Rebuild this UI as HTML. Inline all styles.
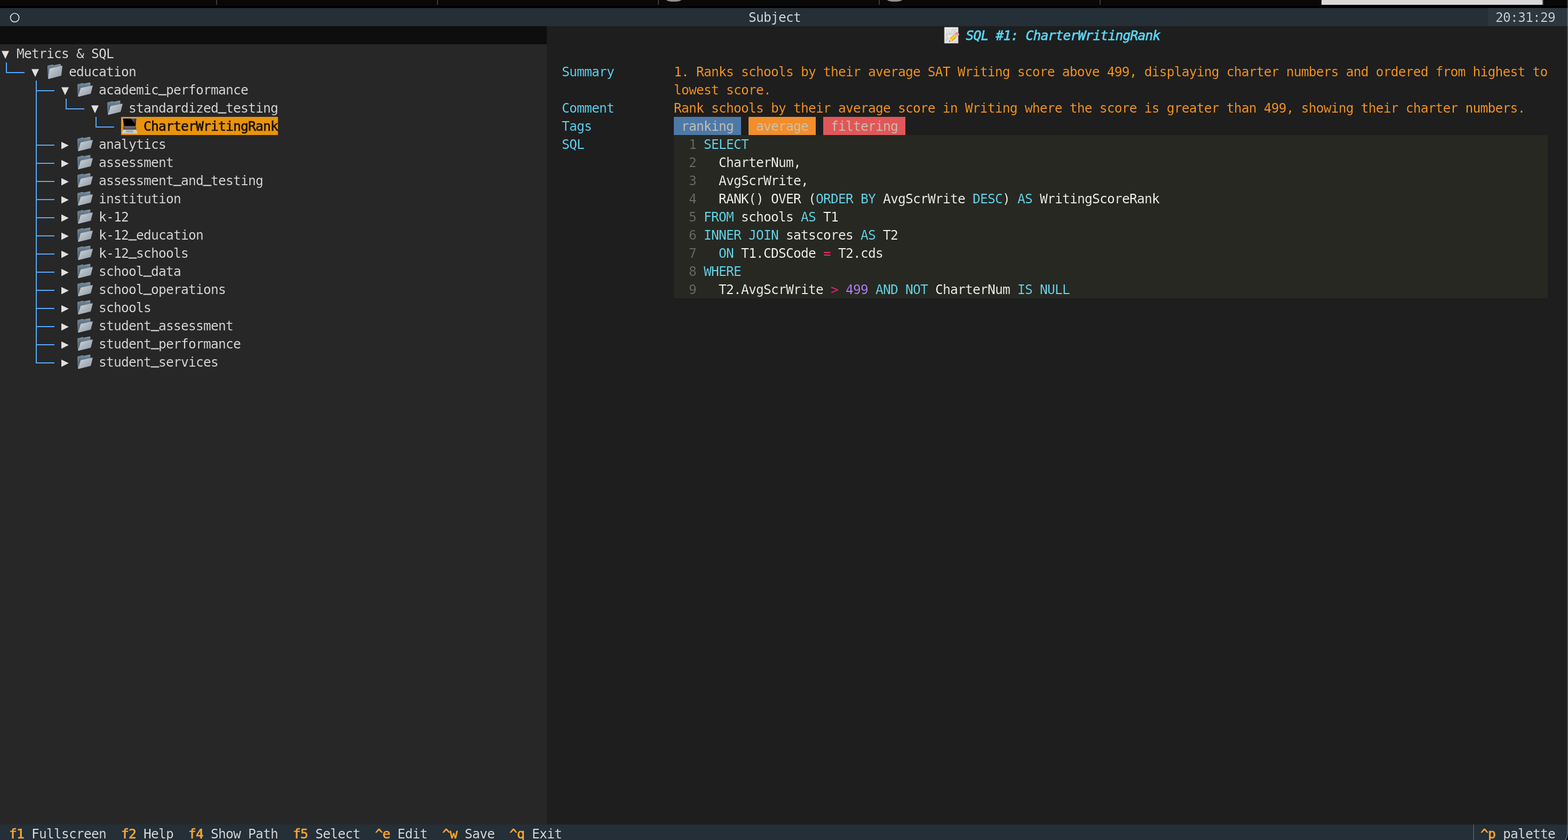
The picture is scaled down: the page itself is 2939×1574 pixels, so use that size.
<!DOCTYPE html>
<html lang="en"><head><meta charset="utf-8"><title>Subject</title>
<style>
html,body{margin:0;padding:0;background:#1e1e1e;}
body{width:2939px;height:1574px;position:relative;overflow:hidden;font-family:"DejaVu Sans Mono", "Liberation Mono", monospace;font-size:24.6px;}
#scr{position:absolute;left:0;top:0;width:2939px;height:1574px;overflow:hidden;transform:translateZ(0)}
.r{position:absolute;display:block}
.t{position:absolute;display:block;height:34px;line-height:36.0px;white-space:pre;letter-spacing:-0.8104px;overflow:visible;font-kerning:none;font-variant-ligatures:none}
.b{-webkit-text-stroke:0.7px currentColor}
.i{font-style:italic}
.u{position:relative;top:-4.6px;-webkit-text-stroke:0.8px currentColor}
</style></head><body><div id="scr">
<div class="r" style="left:0px;top:0px;width:2939px;height:15px;background:#000;"></div>
<div class="r" style="left:0px;top:0px;width:2939px;height:10.5px;background:#080808;"></div>
<div class="r" style="left:405px;top:0px;width:2px;height:9px;background:#3b3b3b;"></div>
<div class="r" style="left:819px;top:0px;width:2px;height:9px;background:#3b3b3b;"></div>
<div class="r" style="left:1233px;top:0px;width:2px;height:9px;background:#3b3b3b;"></div>
<div class="r" style="left:1647px;top:0px;width:2px;height:9px;background:#3b3b3b;"></div>
<div class="r" style="left:2061px;top:0px;width:2px;height:9px;background:#3b3b3b;"></div>
<svg class="r" style="left:1247px;top:0" width="32" height="5" viewBox="0 0 32 5"><ellipse cx="16" cy="-1" rx="14.8" ry="4.1" fill="#909090"/></svg>
<svg class="r" style="left:1661px;top:0" width="32" height="5" viewBox="0 0 32 5"><ellipse cx="16" cy="-1" rx="14.8" ry="4.1" fill="#909090"/></svg>
<div class="r" style="left:2477px;top:0px;width:414px;height:9px;background:#d8d9d8;"></div>
<div class="r" style="left:2891px;top:0px;width:1.5px;height:9px;background:#555;"></div>
<div class="r" style="left:0px;top:15px;width:2939px;height:34px;background:#242f38;"></div>
<div class="r" style="left:2789px;top:15px;width:150px;height:34px;background:#2c373f;"></div>
<div class="r" style="left:0px;top:49px;width:1025px;height:34px;background:#0e0e0e;"></div>
<div class="r" style="left:0px;top:83px;width:1025px;height:1462px;background:#272727;"></div>
<div class="r" style="left:1025px;top:49px;width:1914px;height:1496px;background:#1e1e1e;"></div>
<div class="r" style="left:0px;top:1545px;width:2939px;height:29px;background:#242f38;"></div>
<svg class="r" style="left:0;top:15px" width="56" height="34" viewBox="0 0 56 34"><circle cx="27.6" cy="18.1" r="8.1" fill="none" stroke="#e0e0e0" stroke-width="1.7"/></svg>
<span class="t" style="left:1403px;top:15px;width:98px;color:#e0e0e0;-webkit-text-stroke:0.22px #242f38;">Subject</span>
<span class="t" style="left:2803px;top:15px;width:112px;color:#d0d1d2;-webkit-text-stroke:0.22px #2c373f;">20:31:29</span>
<svg width="0" height="0" style="position:absolute"><linearGradient id="gf" x1="0" y1="0" x2="1" y2="1"><stop offset="0" stop-color="#d3d8dd"/><stop offset="0.5" stop-color="#adb5bd"/><stop offset="1" stop-color="#8f99a3"/></linearGradient><linearGradient id="gb" x1="0" y1="0" x2="0" y2="1"><stop offset="0" stop-color="#9aabb8"/><stop offset="0.14" stop-color="#6e8293"/><stop offset="0.5" stop-color="#54687a"/><stop offset="1" stop-color="#4b5c6b"/></linearGradient><linearGradient id="gl" x1="0" y1="0" x2="1" y2="1"><stop offset="0" stop-color="#6a6a6a"/><stop offset="1" stop-color="#0c0c0c"/></linearGradient><linearGradient id="gp" x1="0" y1="0" x2="1" y2="1"><stop offset="0" stop-color="#f6f6f6"/><stop offset="1" stop-color="#d9d9d9"/></linearGradient><linearGradient id="gy" x1="0" y1="0" x2="0" y2="1"><stop offset="0" stop-color="#d3950a"/><stop offset="0.45" stop-color="#ffd53e"/><stop offset="1" stop-color="#f2b20c"/></linearGradient></svg>
<svg class="r" style="left:3px;top:83px" width="14" height="34" viewBox="0 0 14 34"><path d="M0 12.5 L14 12.5 L7 27.3 Z" fill="#e0e0e0"/></svg>
<span class="t" style="left:31px;top:83px;width:182px;color:#e0e0e0;-webkit-text-stroke:0.22px #272727;">Metrics &amp; SQL</span>
<div class="r" style="left:11px;top:117px;width:2px;height:20px;background:#57a9ff;"></div>
<div class="r" style="left:11px;top:135px;width:35px;height:2px;background:#57a9ff;"></div>
<svg class="r" style="left:59px;top:117px" width="14" height="34" viewBox="0 0 14 34"><path d="M0 12.5 L14 12.5 L7 27.3 Z" fill="#e0e0e0"/></svg>
<svg class="r" style="left:87px;top:117px" width="32" height="34" viewBox="0 0 32 34" overflow="visible"><path d="M2.2 6.4 Q2.2 5.9 2.8 5.8 L12.4 4.0 L13.3 5.2 L25.8 2.9 Q26.5 2.8 26.6 3.5 L27.2 6.2 L26 24 L4 30.6 Q3.2 30.8 3.1 30 Z" fill="url(#gb)"/><path d="M2.6 6.5 L3.5 30" stroke="#93a5b3" stroke-width="0.7" fill="none"/>
<path d="M6.6 11.3 L29.3 6.3 Q30.1 6.2 30 7 L27.9 24.2 Q27.8 24.9 27.1 25.1 L4.3 30.9 Q3.3 31.1 3.4 30.2 L5.6 12.4 Q5.7 11.5 6.6 11.3 Z" fill="url(#gf)"/></svg>
<span class="t" style="left:129px;top:117px;width:126px;color:#e0e0e0;-webkit-text-stroke:0.22px #272727;">education</span>
<div class="r" style="left:67px;top:151px;width:2px;height:530px;background:#57a9ff;"></div>
<div class="r" style="left:67px;top:169px;width:35px;height:2px;background:#57a9ff;"></div>
<svg class="r" style="left:115px;top:151px" width="14" height="34" viewBox="0 0 14 34"><path d="M0 12.5 L14 12.5 L7 27.3 Z" fill="#e0e0e0"/></svg>
<svg class="r" style="left:143px;top:151px" width="32" height="34" viewBox="0 0 32 34" overflow="visible"><path d="M2.4 7.3 Q2.4 6.8 3 6.7 L12.3 4.5 L13.1 5.8 L25.4 3.4 Q26.1 3.3 26.2 4 L26.8 9.5 L24.5 24.6 L4 30 Q3.2 30.2 3.1 29.4 Z" fill="url(#gb)"/><path d="M2.8 7.4 L3.5 29.4" stroke="#93a5b3" stroke-width="0.7" fill="none"/>
<path d="M9 13.8 L30.2 9.2 Q31 9.1 30.8 9.9 L27.4 23.8 Q27.2 24.5 26.5 24.7 L4.2 30.3 Q3.2 30.5 3.5 29.6 L7.9 14.9 Q8.2 14 9 13.8 Z" fill="url(#gf)"/></svg>
<span class="t" style="left:185px;top:151px;width:280px;color:#e0e0e0;-webkit-text-stroke:0.22px #272727;">academic<span class="u">_</span>performance</span>
<div class="r" style="left:123px;top:185px;width:2px;height:20px;background:#57a9ff;"></div>
<div class="r" style="left:123px;top:203px;width:35px;height:2px;background:#57a9ff;"></div>
<svg class="r" style="left:171px;top:185px" width="14" height="34" viewBox="0 0 14 34"><path d="M0 12.5 L14 12.5 L7 27.3 Z" fill="#e0e0e0"/></svg>
<svg class="r" style="left:199px;top:185px" width="32" height="34" viewBox="0 0 32 34" overflow="visible"><path d="M2.4 7.3 Q2.4 6.8 3 6.7 L12.3 4.5 L13.1 5.8 L25.4 3.4 Q26.1 3.3 26.2 4 L26.8 9.5 L24.5 24.6 L4 30 Q3.2 30.2 3.1 29.4 Z" fill="url(#gb)"/><path d="M2.8 7.4 L3.5 29.4" stroke="#93a5b3" stroke-width="0.7" fill="none"/>
<path d="M9 13.8 L30.2 9.2 Q31 9.1 30.8 9.9 L27.4 23.8 Q27.2 24.5 26.5 24.7 L4.2 30.3 Q3.2 30.5 3.5 29.6 L7.9 14.9 Q8.2 14 9 13.8 Z" fill="url(#gf)"/></svg>
<span class="t" style="left:241px;top:185px;width:280px;color:#e0e0e0;-webkit-text-stroke:0.22px #272727;">standardized<span class="u">_</span>testing</span>
<div class="r" style="left:179px;top:219px;width:2px;height:20px;background:#57a9ff;"></div>
<div class="r" style="left:179px;top:237px;width:35px;height:2px;background:#57a9ff;"></div>
<div class="r" style="left:227px;top:219px;width:294px;height:34px;background:#e8940c;"></div>
<svg class="r" style="left:227px;top:219px" width="32" height="34" viewBox="0 0 32 34" overflow="visible"><path d="M2.8 2.4 L29.2 2.4 L27.7 17.2 L4.4 17.2 Z" fill="#c9ccd0"/>
<path d="M3.5 3 L28.6 3 L27.2 17 L5 17 Z" fill="#020202"/>
<path d="M18.8 3.1 L28.5 3.1 L27.3 15.8 Z" fill="url(#gl)"/>
<path d="M4.4 17 L27.7 17 L28.4 24.2 L3.7 24.2 Z" fill="#4e4e50"/>
<path d="M6 18 L26.2 18 L26.5 20 L5.7 20 Z" fill="#6c6c6e"/>
<path d="M6.6 20.6 L25.6 20.6 L25.8 21.6 L6.4 21.6 Z" fill="#666668"/>
<path d="M3.7 24 L28.4 24 L30.6 30.6 Q30.7 31.3 30 31.3 L2.2 31.3 Q1.5 31.3 1.6 30.6 Z" fill="#cdced0"/>
<path d="M9.3 25 L22.7 25 L23 29.6 L9 29.6 Z" fill="#a6a7a9"/></svg>
<span class="t b" style="left:269px;top:219px;width:252px;color:#1a1206;">CharterWritingRank</span>
<div class="r" style="left:67px;top:271px;width:35px;height:2px;background:#57a9ff;"></div>
<svg class="r" style="left:115px;top:253px" width="14" height="34" viewBox="0 0 14 34"><path d="M0 12.7 L0 26.5 L13.8 19.6 Z" fill="#e0e0e0"/></svg>
<svg class="r" style="left:143px;top:253px" width="32" height="34" viewBox="0 0 32 34" overflow="visible"><path d="M2.4 7.3 Q2.4 6.8 3 6.7 L12.3 4.5 L13.1 5.8 L25.4 3.4 Q26.1 3.3 26.2 4 L26.8 9.5 L24.5 24.6 L4 30 Q3.2 30.2 3.1 29.4 Z" fill="url(#gb)"/><path d="M2.8 7.4 L3.5 29.4" stroke="#93a5b3" stroke-width="0.7" fill="none"/>
<path d="M9 13.8 L30.2 9.2 Q31 9.1 30.8 9.9 L27.4 23.8 Q27.2 24.5 26.5 24.7 L4.2 30.3 Q3.2 30.5 3.5 29.6 L7.9 14.9 Q8.2 14 9 13.8 Z" fill="url(#gf)"/></svg>
<span class="t" style="left:185px;top:253px;width:126px;color:#e0e0e0;-webkit-text-stroke:0.22px #272727;">analytics</span>
<div class="r" style="left:67px;top:305px;width:35px;height:2px;background:#57a9ff;"></div>
<svg class="r" style="left:115px;top:287px" width="14" height="34" viewBox="0 0 14 34"><path d="M0 12.7 L0 26.5 L13.8 19.6 Z" fill="#e0e0e0"/></svg>
<svg class="r" style="left:143px;top:287px" width="32" height="34" viewBox="0 0 32 34" overflow="visible"><path d="M2.4 7.3 Q2.4 6.8 3 6.7 L12.3 4.5 L13.1 5.8 L25.4 3.4 Q26.1 3.3 26.2 4 L26.8 9.5 L24.5 24.6 L4 30 Q3.2 30.2 3.1 29.4 Z" fill="url(#gb)"/><path d="M2.8 7.4 L3.5 29.4" stroke="#93a5b3" stroke-width="0.7" fill="none"/>
<path d="M9 13.8 L30.2 9.2 Q31 9.1 30.8 9.9 L27.4 23.8 Q27.2 24.5 26.5 24.7 L4.2 30.3 Q3.2 30.5 3.5 29.6 L7.9 14.9 Q8.2 14 9 13.8 Z" fill="url(#gf)"/></svg>
<span class="t" style="left:185px;top:287px;width:140px;color:#e0e0e0;-webkit-text-stroke:0.22px #272727;">assessment</span>
<div class="r" style="left:67px;top:339px;width:35px;height:2px;background:#57a9ff;"></div>
<svg class="r" style="left:115px;top:321px" width="14" height="34" viewBox="0 0 14 34"><path d="M0 12.7 L0 26.5 L13.8 19.6 Z" fill="#e0e0e0"/></svg>
<svg class="r" style="left:143px;top:321px" width="32" height="34" viewBox="0 0 32 34" overflow="visible"><path d="M2.4 7.3 Q2.4 6.8 3 6.7 L12.3 4.5 L13.1 5.8 L25.4 3.4 Q26.1 3.3 26.2 4 L26.8 9.5 L24.5 24.6 L4 30 Q3.2 30.2 3.1 29.4 Z" fill="url(#gb)"/><path d="M2.8 7.4 L3.5 29.4" stroke="#93a5b3" stroke-width="0.7" fill="none"/>
<path d="M9 13.8 L30.2 9.2 Q31 9.1 30.8 9.9 L27.4 23.8 Q27.2 24.5 26.5 24.7 L4.2 30.3 Q3.2 30.5 3.5 29.6 L7.9 14.9 Q8.2 14 9 13.8 Z" fill="url(#gf)"/></svg>
<span class="t" style="left:185px;top:321px;width:308px;color:#e0e0e0;-webkit-text-stroke:0.22px #272727;">assessment<span class="u">_</span>and<span class="u">_</span>testing</span>
<div class="r" style="left:67px;top:373px;width:35px;height:2px;background:#57a9ff;"></div>
<svg class="r" style="left:115px;top:355px" width="14" height="34" viewBox="0 0 14 34"><path d="M0 12.7 L0 26.5 L13.8 19.6 Z" fill="#e0e0e0"/></svg>
<svg class="r" style="left:143px;top:355px" width="32" height="34" viewBox="0 0 32 34" overflow="visible"><path d="M2.4 7.3 Q2.4 6.8 3 6.7 L12.3 4.5 L13.1 5.8 L25.4 3.4 Q26.1 3.3 26.2 4 L26.8 9.5 L24.5 24.6 L4 30 Q3.2 30.2 3.1 29.4 Z" fill="url(#gb)"/><path d="M2.8 7.4 L3.5 29.4" stroke="#93a5b3" stroke-width="0.7" fill="none"/>
<path d="M9 13.8 L30.2 9.2 Q31 9.1 30.8 9.9 L27.4 23.8 Q27.2 24.5 26.5 24.7 L4.2 30.3 Q3.2 30.5 3.5 29.6 L7.9 14.9 Q8.2 14 9 13.8 Z" fill="url(#gf)"/></svg>
<span class="t" style="left:185px;top:355px;width:154px;color:#e0e0e0;-webkit-text-stroke:0.22px #272727;">institution</span>
<div class="r" style="left:67px;top:407px;width:35px;height:2px;background:#57a9ff;"></div>
<svg class="r" style="left:115px;top:389px" width="14" height="34" viewBox="0 0 14 34"><path d="M0 12.7 L0 26.5 L13.8 19.6 Z" fill="#e0e0e0"/></svg>
<svg class="r" style="left:143px;top:389px" width="32" height="34" viewBox="0 0 32 34" overflow="visible"><path d="M2.4 7.3 Q2.4 6.8 3 6.7 L12.3 4.5 L13.1 5.8 L25.4 3.4 Q26.1 3.3 26.2 4 L26.8 9.5 L24.5 24.6 L4 30 Q3.2 30.2 3.1 29.4 Z" fill="url(#gb)"/><path d="M2.8 7.4 L3.5 29.4" stroke="#93a5b3" stroke-width="0.7" fill="none"/>
<path d="M9 13.8 L30.2 9.2 Q31 9.1 30.8 9.9 L27.4 23.8 Q27.2 24.5 26.5 24.7 L4.2 30.3 Q3.2 30.5 3.5 29.6 L7.9 14.9 Q8.2 14 9 13.8 Z" fill="url(#gf)"/></svg>
<span class="t" style="left:185px;top:389px;width:56px;color:#e0e0e0;-webkit-text-stroke:0.22px #272727;">k-12</span>
<div class="r" style="left:67px;top:441px;width:35px;height:2px;background:#57a9ff;"></div>
<svg class="r" style="left:115px;top:423px" width="14" height="34" viewBox="0 0 14 34"><path d="M0 12.7 L0 26.5 L13.8 19.6 Z" fill="#e0e0e0"/></svg>
<svg class="r" style="left:143px;top:423px" width="32" height="34" viewBox="0 0 32 34" overflow="visible"><path d="M2.4 7.3 Q2.4 6.8 3 6.7 L12.3 4.5 L13.1 5.8 L25.4 3.4 Q26.1 3.3 26.2 4 L26.8 9.5 L24.5 24.6 L4 30 Q3.2 30.2 3.1 29.4 Z" fill="url(#gb)"/><path d="M2.8 7.4 L3.5 29.4" stroke="#93a5b3" stroke-width="0.7" fill="none"/>
<path d="M9 13.8 L30.2 9.2 Q31 9.1 30.8 9.9 L27.4 23.8 Q27.2 24.5 26.5 24.7 L4.2 30.3 Q3.2 30.5 3.5 29.6 L7.9 14.9 Q8.2 14 9 13.8 Z" fill="url(#gf)"/></svg>
<span class="t" style="left:185px;top:423px;width:196px;color:#e0e0e0;-webkit-text-stroke:0.22px #272727;">k-12<span class="u">_</span>education</span>
<div class="r" style="left:67px;top:475px;width:35px;height:2px;background:#57a9ff;"></div>
<svg class="r" style="left:115px;top:457px" width="14" height="34" viewBox="0 0 14 34"><path d="M0 12.7 L0 26.5 L13.8 19.6 Z" fill="#e0e0e0"/></svg>
<svg class="r" style="left:143px;top:457px" width="32" height="34" viewBox="0 0 32 34" overflow="visible"><path d="M2.4 7.3 Q2.4 6.8 3 6.7 L12.3 4.5 L13.1 5.8 L25.4 3.4 Q26.1 3.3 26.2 4 L26.8 9.5 L24.5 24.6 L4 30 Q3.2 30.2 3.1 29.4 Z" fill="url(#gb)"/><path d="M2.8 7.4 L3.5 29.4" stroke="#93a5b3" stroke-width="0.7" fill="none"/>
<path d="M9 13.8 L30.2 9.2 Q31 9.1 30.8 9.9 L27.4 23.8 Q27.2 24.5 26.5 24.7 L4.2 30.3 Q3.2 30.5 3.5 29.6 L7.9 14.9 Q8.2 14 9 13.8 Z" fill="url(#gf)"/></svg>
<span class="t" style="left:185px;top:457px;width:168px;color:#e0e0e0;-webkit-text-stroke:0.22px #272727;">k-12<span class="u">_</span>schools</span>
<div class="r" style="left:67px;top:509px;width:35px;height:2px;background:#57a9ff;"></div>
<svg class="r" style="left:115px;top:491px" width="14" height="34" viewBox="0 0 14 34"><path d="M0 12.7 L0 26.5 L13.8 19.6 Z" fill="#e0e0e0"/></svg>
<svg class="r" style="left:143px;top:491px" width="32" height="34" viewBox="0 0 32 34" overflow="visible"><path d="M2.4 7.3 Q2.4 6.8 3 6.7 L12.3 4.5 L13.1 5.8 L25.4 3.4 Q26.1 3.3 26.2 4 L26.8 9.5 L24.5 24.6 L4 30 Q3.2 30.2 3.1 29.4 Z" fill="url(#gb)"/><path d="M2.8 7.4 L3.5 29.4" stroke="#93a5b3" stroke-width="0.7" fill="none"/>
<path d="M9 13.8 L30.2 9.2 Q31 9.1 30.8 9.9 L27.4 23.8 Q27.2 24.5 26.5 24.7 L4.2 30.3 Q3.2 30.5 3.5 29.6 L7.9 14.9 Q8.2 14 9 13.8 Z" fill="url(#gf)"/></svg>
<span class="t" style="left:185px;top:491px;width:154px;color:#e0e0e0;-webkit-text-stroke:0.22px #272727;">school<span class="u">_</span>data</span>
<div class="r" style="left:67px;top:543px;width:35px;height:2px;background:#57a9ff;"></div>
<svg class="r" style="left:115px;top:525px" width="14" height="34" viewBox="0 0 14 34"><path d="M0 12.7 L0 26.5 L13.8 19.6 Z" fill="#e0e0e0"/></svg>
<svg class="r" style="left:143px;top:525px" width="32" height="34" viewBox="0 0 32 34" overflow="visible"><path d="M2.4 7.3 Q2.4 6.8 3 6.7 L12.3 4.5 L13.1 5.8 L25.4 3.4 Q26.1 3.3 26.2 4 L26.8 9.5 L24.5 24.6 L4 30 Q3.2 30.2 3.1 29.4 Z" fill="url(#gb)"/><path d="M2.8 7.4 L3.5 29.4" stroke="#93a5b3" stroke-width="0.7" fill="none"/>
<path d="M9 13.8 L30.2 9.2 Q31 9.1 30.8 9.9 L27.4 23.8 Q27.2 24.5 26.5 24.7 L4.2 30.3 Q3.2 30.5 3.5 29.6 L7.9 14.9 Q8.2 14 9 13.8 Z" fill="url(#gf)"/></svg>
<span class="t" style="left:185px;top:525px;width:238px;color:#e0e0e0;-webkit-text-stroke:0.22px #272727;">school<span class="u">_</span>operations</span>
<div class="r" style="left:67px;top:577px;width:35px;height:2px;background:#57a9ff;"></div>
<svg class="r" style="left:115px;top:559px" width="14" height="34" viewBox="0 0 14 34"><path d="M0 12.7 L0 26.5 L13.8 19.6 Z" fill="#e0e0e0"/></svg>
<svg class="r" style="left:143px;top:559px" width="32" height="34" viewBox="0 0 32 34" overflow="visible"><path d="M2.4 7.3 Q2.4 6.8 3 6.7 L12.3 4.5 L13.1 5.8 L25.4 3.4 Q26.1 3.3 26.2 4 L26.8 9.5 L24.5 24.6 L4 30 Q3.2 30.2 3.1 29.4 Z" fill="url(#gb)"/><path d="M2.8 7.4 L3.5 29.4" stroke="#93a5b3" stroke-width="0.7" fill="none"/>
<path d="M9 13.8 L30.2 9.2 Q31 9.1 30.8 9.9 L27.4 23.8 Q27.2 24.5 26.5 24.7 L4.2 30.3 Q3.2 30.5 3.5 29.6 L7.9 14.9 Q8.2 14 9 13.8 Z" fill="url(#gf)"/></svg>
<span class="t" style="left:185px;top:559px;width:98px;color:#e0e0e0;-webkit-text-stroke:0.22px #272727;">schools</span>
<div class="r" style="left:67px;top:611px;width:35px;height:2px;background:#57a9ff;"></div>
<svg class="r" style="left:115px;top:593px" width="14" height="34" viewBox="0 0 14 34"><path d="M0 12.7 L0 26.5 L13.8 19.6 Z" fill="#e0e0e0"/></svg>
<svg class="r" style="left:143px;top:593px" width="32" height="34" viewBox="0 0 32 34" overflow="visible"><path d="M2.4 7.3 Q2.4 6.8 3 6.7 L12.3 4.5 L13.1 5.8 L25.4 3.4 Q26.1 3.3 26.2 4 L26.8 9.5 L24.5 24.6 L4 30 Q3.2 30.2 3.1 29.4 Z" fill="url(#gb)"/><path d="M2.8 7.4 L3.5 29.4" stroke="#93a5b3" stroke-width="0.7" fill="none"/>
<path d="M9 13.8 L30.2 9.2 Q31 9.1 30.8 9.9 L27.4 23.8 Q27.2 24.5 26.5 24.7 L4.2 30.3 Q3.2 30.5 3.5 29.6 L7.9 14.9 Q8.2 14 9 13.8 Z" fill="url(#gf)"/></svg>
<span class="t" style="left:185px;top:593px;width:252px;color:#e0e0e0;-webkit-text-stroke:0.22px #272727;">student<span class="u">_</span>assessment</span>
<div class="r" style="left:67px;top:645px;width:35px;height:2px;background:#57a9ff;"></div>
<svg class="r" style="left:115px;top:627px" width="14" height="34" viewBox="0 0 14 34"><path d="M0 12.7 L0 26.5 L13.8 19.6 Z" fill="#e0e0e0"/></svg>
<svg class="r" style="left:143px;top:627px" width="32" height="34" viewBox="0 0 32 34" overflow="visible"><path d="M2.4 7.3 Q2.4 6.8 3 6.7 L12.3 4.5 L13.1 5.8 L25.4 3.4 Q26.1 3.3 26.2 4 L26.8 9.5 L24.5 24.6 L4 30 Q3.2 30.2 3.1 29.4 Z" fill="url(#gb)"/><path d="M2.8 7.4 L3.5 29.4" stroke="#93a5b3" stroke-width="0.7" fill="none"/>
<path d="M9 13.8 L30.2 9.2 Q31 9.1 30.8 9.9 L27.4 23.8 Q27.2 24.5 26.5 24.7 L4.2 30.3 Q3.2 30.5 3.5 29.6 L7.9 14.9 Q8.2 14 9 13.8 Z" fill="url(#gf)"/></svg>
<span class="t" style="left:185px;top:627px;width:266px;color:#e0e0e0;-webkit-text-stroke:0.22px #272727;">student<span class="u">_</span>performance</span>
<div class="r" style="left:67px;top:679px;width:35px;height:2px;background:#57a9ff;"></div>
<svg class="r" style="left:115px;top:661px" width="14" height="34" viewBox="0 0 14 34"><path d="M0 12.7 L0 26.5 L13.8 19.6 Z" fill="#e0e0e0"/></svg>
<svg class="r" style="left:143px;top:661px" width="32" height="34" viewBox="0 0 32 34" overflow="visible"><path d="M2.4 7.3 Q2.4 6.8 3 6.7 L12.3 4.5 L13.1 5.8 L25.4 3.4 Q26.1 3.3 26.2 4 L26.8 9.5 L24.5 24.6 L4 30 Q3.2 30.2 3.1 29.4 Z" fill="url(#gb)"/><path d="M2.8 7.4 L3.5 29.4" stroke="#93a5b3" stroke-width="0.7" fill="none"/>
<path d="M9 13.8 L30.2 9.2 Q31 9.1 30.8 9.9 L27.4 23.8 Q27.2 24.5 26.5 24.7 L4.2 30.3 Q3.2 30.5 3.5 29.6 L7.9 14.9 Q8.2 14 9 13.8 Z" fill="url(#gf)"/></svg>
<span class="t" style="left:185px;top:661px;width:224px;color:#e0e0e0;-webkit-text-stroke:0.22px #272727;">student<span class="u">_</span>services</span>
<svg class="r" style="left:1767px;top:49px" width="32" height="34" viewBox="0 0 32 34" overflow="visible"><path d="M3.2 2.1 L29 2.1 L29 32 L3.2 32 Z" fill="url(#gp)" stroke="#c4c4c4" stroke-width="0.6"/>
<path d="M6 6.6h3M10.5 6.4h1.4M13 6.6h1.4M16.5 6.8h4.5M22 6.4h3.4M6 9.8h2.5M10 10h3.4M16 9.7h2M20 9.9h3.6M6 12.9h2M9 13.1h9.5M20 12.8h2M5.6 15.6h4.4M11 15.8h3.4M16.5 15.5h1.6M5.6 18.3h3.4M6 21.2h1.6M8.6 21.5h2.2M5.6 24.3h5M5.3 27.4h3.5" stroke="#9d9d9d" stroke-width="0.9" fill="none"/>
<g transform="translate(28.6 12.8) rotate(135.5)">
<path d="M1.2 -3.75 L4.6 -3.75 L4.6 3.75 L1.2 3.75 Q-0.4 3.75 -0.4 1.6 L-0.4 -1.6 Q-0.4 -3.75 1.2 -3.75 Z" fill="#f08d93"/>
<path d="M0.6 -3.75 L4.6 -3.75 L4.6 -1 L-0.2 -1.4 Q0 -3 0.6 -3.75Z" fill="#f8aeb2"/>
<path d="M4.6 -3.75 L7.2 -3.75 L7.2 3.75 L4.6 3.75 Z" fill="#b3bfd2"/>
<path d="M4.6 -3.75 L7.2 -3.75 L7.2 -1.2 L4.6 -1.2 Z" fill="#d6deea"/>
<path d="M7.2 -3.75 L18.6 -3.75 L18.6 3.75 L7.2 3.75 Z" fill="url(#gy)"/>
<path d="M18.6 -3.75 L22 -0.9 L22 0.9 L18.6 3.75 Z" fill="#f2cf8e"/>
<path d="M21.4 -1.3 L23.4 0 L21.4 1.3 Z" fill="#3a3a3a"/>
</g></svg>
<span class="t b i" style="left:1809px;top:49px;width:364px;color:#58d5f5;margin-left:1.5px;-webkit-text-stroke:0.75px currentColor;">SQL #1: CharterWritingRank</span>
<span class="t" style="left:1053px;top:117px;width:98px;color:#60dafa;-webkit-text-stroke:0.22px #1e1e1e;">Summary</span>
<span class="t" style="left:1263px;top:117px;width:1638px;color:#ff9a1f;-webkit-text-stroke:0.22px #1e1e1e;">1. Ranks schools by their average SAT Writing score above 499, displaying charter numbers and ordered from highest to</span>
<span class="t" style="left:1263px;top:151px;width:182px;color:#ff9a1f;-webkit-text-stroke:0.22px #1e1e1e;">lowest score.</span>
<span class="t" style="left:1053px;top:185px;width:98px;color:#60dafa;-webkit-text-stroke:0.22px #1e1e1e;">Comment</span>
<span class="t" style="left:1263px;top:185px;width:1596px;color:#ff9a1f;-webkit-text-stroke:0.22px #1e1e1e;">Rank schools by their average score in Writing where the score is greater than 499, showing their charter numbers.</span>
<span class="t" style="left:1053px;top:219px;width:56px;color:#60dafa;-webkit-text-stroke:0.22px #1e1e1e;">Tags</span>
<span class="t" style="left:1263px;top:219px;width:126px;color:#c9c5b5;background:#4e79a7;-webkit-text-stroke:0.22px #4e79a7;"> ranking </span>
<span class="t" style="left:1403px;top:219px;width:126px;color:#c9c5b5;background:#f28e2b;-webkit-text-stroke:0.22px #f28e2b;"> average </span>
<span class="t" style="left:1543px;top:219px;width:154px;color:#c9c5b5;background:#e15759;-webkit-text-stroke:0.22px #e15759;"> filtering </span>
<span class="t" style="left:1053px;top:253px;width:42px;color:#60dafa;-webkit-text-stroke:0.22px #1e1e1e;">SQL</span>
<div class="r" style="left:1263px;top:253px;width:1638px;height:306px;background:#272822;"></div>
<span class="t" style="left:1291px;top:253px;width:14px;color:#6a6b64;-webkit-text-stroke:0.22px #272822;">1</span>
<span class="t" style="left:1319px;top:253px;width:84px;color:#66d9ef;-webkit-text-stroke:0.22px #272822;">SELECT</span>
<span class="t" style="left:1291px;top:287px;width:14px;color:#6a6b64;-webkit-text-stroke:0.22px #272822;">2</span>
<span class="t" style="left:1347px;top:287px;width:154px;color:#f8f8f2;-webkit-text-stroke:0.22px #272822;">CharterNum,</span>
<span class="t" style="left:1291px;top:321px;width:14px;color:#6a6b64;-webkit-text-stroke:0.22px #272822;">3</span>
<span class="t" style="left:1347px;top:321px;width:168px;color:#f8f8f2;-webkit-text-stroke:0.22px #272822;">AvgScrWrite,</span>
<span class="t" style="left:1291px;top:355px;width:14px;color:#6a6b64;-webkit-text-stroke:0.22px #272822;">4</span>
<span class="t" style="left:1347px;top:355px;width:182px;color:#f8f8f2;-webkit-text-stroke:0.22px #272822;">RANK() OVER (</span>
<span class="t" style="left:1529px;top:355px;width:112px;color:#66d9ef;-webkit-text-stroke:0.22px #272822;">ORDER BY</span>
<span class="t" style="left:1655px;top:355px;width:154px;color:#f8f8f2;-webkit-text-stroke:0.22px #272822;">AvgScrWrite</span>
<span class="t" style="left:1823px;top:355px;width:56px;color:#66d9ef;-webkit-text-stroke:0.22px #272822;">DESC</span>
<span class="t" style="left:1879px;top:355px;width:14px;color:#f8f8f2;-webkit-text-stroke:0.22px #272822;">)</span>
<span class="t" style="left:1907px;top:355px;width:28px;color:#66d9ef;-webkit-text-stroke:0.22px #272822;">AS</span>
<span class="t" style="left:1949px;top:355px;width:224px;color:#f8f8f2;-webkit-text-stroke:0.22px #272822;">WritingScoreRank</span>
<span class="t" style="left:1291px;top:389px;width:14px;color:#6a6b64;-webkit-text-stroke:0.22px #272822;">5</span>
<span class="t" style="left:1319px;top:389px;width:56px;color:#66d9ef;-webkit-text-stroke:0.22px #272822;">FROM</span>
<span class="t" style="left:1389px;top:389px;width:98px;color:#f8f8f2;-webkit-text-stroke:0.22px #272822;">schools</span>
<span class="t" style="left:1501px;top:389px;width:28px;color:#66d9ef;-webkit-text-stroke:0.22px #272822;">AS</span>
<span class="t" style="left:1543px;top:389px;width:28px;color:#f8f8f2;-webkit-text-stroke:0.22px #272822;">T1</span>
<span class="t" style="left:1291px;top:423px;width:14px;color:#6a6b64;-webkit-text-stroke:0.22px #272822;">6</span>
<span class="t" style="left:1319px;top:423px;width:140px;color:#66d9ef;-webkit-text-stroke:0.22px #272822;">INNER JOIN</span>
<span class="t" style="left:1473px;top:423px;width:126px;color:#f8f8f2;-webkit-text-stroke:0.22px #272822;">satscores</span>
<span class="t" style="left:1613px;top:423px;width:28px;color:#66d9ef;-webkit-text-stroke:0.22px #272822;">AS</span>
<span class="t" style="left:1655px;top:423px;width:28px;color:#f8f8f2;-webkit-text-stroke:0.22px #272822;">T2</span>
<span class="t" style="left:1291px;top:457px;width:14px;color:#6a6b64;-webkit-text-stroke:0.22px #272822;">7</span>
<span class="t" style="left:1347px;top:457px;width:28px;color:#66d9ef;-webkit-text-stroke:0.22px #272822;">ON</span>
<span class="t" style="left:1389px;top:457px;width:140px;color:#f8f8f2;-webkit-text-stroke:0.22px #272822;">T1.CDSCode</span>
<span class="t" style="left:1543px;top:457px;width:14px;color:#f92672;-webkit-text-stroke:0.22px #272822;">=</span>
<span class="t" style="left:1571px;top:457px;width:84px;color:#f8f8f2;-webkit-text-stroke:0.22px #272822;">T2.cds</span>
<span class="t" style="left:1291px;top:491px;width:14px;color:#6a6b64;-webkit-text-stroke:0.22px #272822;">8</span>
<span class="t" style="left:1319px;top:491px;width:70px;color:#66d9ef;-webkit-text-stroke:0.22px #272822;">WHERE</span>
<span class="t" style="left:1291px;top:525px;width:14px;color:#6a6b64;-webkit-text-stroke:0.22px #272822;">9</span>
<span class="t" style="left:1347px;top:525px;width:196px;color:#f8f8f2;-webkit-text-stroke:0.22px #272822;">T2.AvgScrWrite</span>
<span class="t" style="left:1557px;top:525px;width:14px;color:#f92672;-webkit-text-stroke:0.22px #272822;">&gt;</span>
<span class="t" style="left:1585px;top:525px;width:42px;color:#ae81ff;-webkit-text-stroke:0.22px #272822;">499</span>
<span class="t" style="left:1641px;top:525px;width:98px;color:#66d9ef;-webkit-text-stroke:0.22px #272822;">AND NOT</span>
<span class="t" style="left:1753px;top:525px;width:140px;color:#f8f8f2;-webkit-text-stroke:0.22px #272822;">CharterNum</span>
<span class="t" style="left:1907px;top:525px;width:98px;color:#66d9ef;-webkit-text-stroke:0.22px #272822;">IS NULL</span>
<span class="t b" style="left:17px;top:1545px;width:28px;color:#ffa62b;">f1</span>
<span class="t" style="left:59px;top:1545px;width:140px;color:#e0e0e0;-webkit-text-stroke:0.22px #242f38;">Fullscreen</span>
<span class="t b" style="left:227px;top:1545px;width:28px;color:#ffa62b;">f2</span>
<span class="t" style="left:269px;top:1545px;width:56px;color:#e0e0e0;-webkit-text-stroke:0.22px #242f38;">Help</span>
<span class="t b" style="left:353px;top:1545px;width:28px;color:#ffa62b;">f4</span>
<span class="t" style="left:395px;top:1545px;width:126px;color:#e0e0e0;-webkit-text-stroke:0.22px #242f38;">Show Path</span>
<span class="t b" style="left:549px;top:1545px;width:28px;color:#ffa62b;">f5</span>
<span class="t" style="left:591px;top:1545px;width:84px;color:#e0e0e0;-webkit-text-stroke:0.22px #242f38;">Select</span>
<span class="t b" style="left:703px;top:1545px;width:28px;color:#ffa62b;">^e</span>
<span class="t" style="left:745px;top:1545px;width:56px;color:#e0e0e0;-webkit-text-stroke:0.22px #242f38;">Edit</span>
<span class="t b" style="left:829px;top:1545px;width:28px;color:#ffa62b;">^w</span>
<span class="t" style="left:871px;top:1545px;width:56px;color:#e0e0e0;-webkit-text-stroke:0.22px #242f38;">Save</span>
<span class="t b" style="left:955px;top:1545px;width:28px;color:#ffa62b;">^q</span>
<span class="t" style="left:997px;top:1545px;width:56px;color:#e0e0e0;-webkit-text-stroke:0.22px #242f38;">Exit</span>
<div class="r" style="left:2761px;top:1545px;width:2px;height:29px;background:#4a545d;"></div>
<span class="t b" style="left:2775px;top:1545px;width:28px;color:#ffa62b;">^p</span>
<span class="t" style="left:2817px;top:1545px;width:98px;color:#e0e0e0;-webkit-text-stroke:0.22px #242f38;">palette</span>
<div class="r" style="left:2937px;top:0px;width:2px;height:1560px;background:rgba(255,255,255,0.2);"></div>
<svg class="r" style="left:2919px;top:1554px" width="20" height="20" viewBox="2919 1554 20 20"><path d="M2940 1560 L2938 1560 A26.5 26.5 0 0 1 2934 1574 L2934 1576 L2940 1576 Z" fill="#000"/><path d="M2938 1560 A26.5 26.5 0 0 1 2934 1574.5" fill="none" stroke="#57616a" stroke-width="2"/></svg>
</div></body></html>
